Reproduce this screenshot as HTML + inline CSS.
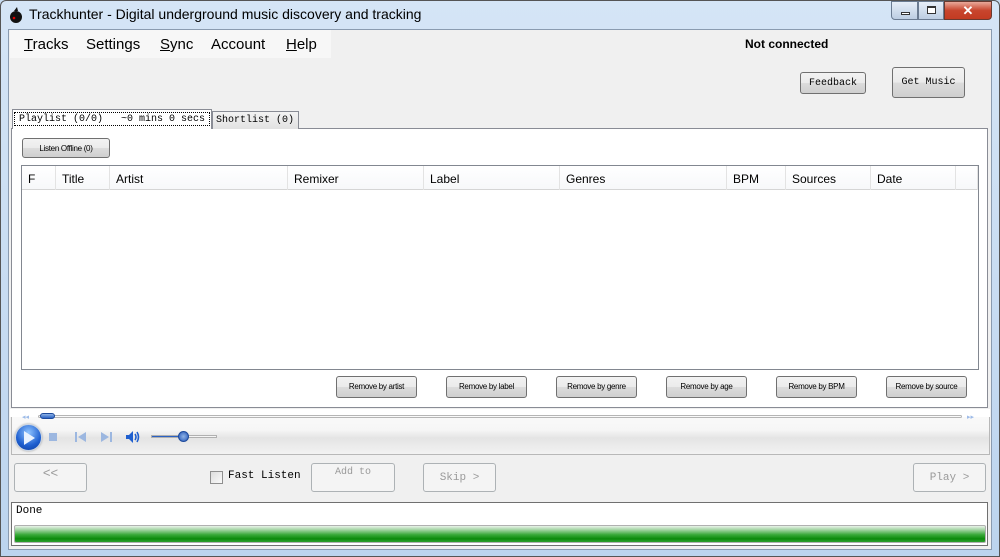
<!DOCTYPE html>
<html><head><meta charset="utf-8"><style>
*{box-sizing:border-box;margin:0;padding:0}
body{width:1000px;height:557px;overflow:hidden;background:#c6dbf1;font-family:"Liberation Sans",sans-serif;position:relative}
.a{position:absolute}
.frame{left:0;top:0;width:1000px;height:557px;background:linear-gradient(#d5e5f6,#bcd4ee);border:1px solid #555;border-radius:6px 6px 0 0}
.client{left:8px;top:29px;width:984px;height:521px;background:#f0f0f0;border:1px solid #8a9bb0}
.mono{font-family:"Liberation Mono","DejaVu Sans Mono",monospace;font-size:10px;white-space:nowrap}
.btn{border:1px solid #707070;border-radius:3px;background:linear-gradient(#f2f2f2 0%,#ebebeb 50%,#dcdcdc 51%,#cfcfcf 100%);text-align:center;color:#000}
.rb{font-size:8px;line-height:19px;letter-spacing:-0.3px;white-space:nowrap}
.dis{border:1px solid #adb2b5;border-radius:3px;background:#f4f4f4;color:#9a9a9a;text-align:center}
.col{top:0;height:24px;border-right:1px solid #e3e3e3;font-size:12px;line-height:26px;padding-left:6px}
.menu span{position:absolute;top:0}
</style></head><body>
<div class="a frame"></div>
<svg class="a" style="left:8px;top:6px" width="16" height="18"><circle cx="8" cy="11" r="6" fill="#111"/><path d="M6 5 L9 1 L10 5Z" fill="#111"/><circle cx="6" cy="12" r="1.3" fill="#d00"/></svg>
<div class="a" style="left:29px;top:6px;font-size:14px;color:#000">Trackhunter - Digital underground music discovery and tracking</div>
<div class="a" style="left:891px;top:1px;width:27px;height:19px;border:1px solid #6a7b91;border-radius:0 0 0 4px;background:linear-gradient(#e6eef8,#bccde2)"><div class="a" style="left:9px;top:10px;width:9px;height:3px;border:1px solid #333;background:#fff"></div></div>
<div class="a" style="left:918px;top:1px;width:26px;height:19px;border:1px solid #6a7b91;background:linear-gradient(#e6eef8,#bccde2)"><div class="a" style="left:8px;top:4px;width:9px;height:8px;border:1px solid #333;border-top-width:2px;background:#fff"></div></div>
<div class="a" style="left:944px;top:1px;width:48px;height:19px;border:1px solid #6a3a30;border-radius:0 0 4px 0;background:linear-gradient(#e9a99a,#c8452d 50%,#c33b22);color:#fff;font-weight:bold;font-size:13px;text-align:center;line-height:17px">✕</div>
<div class="a client"></div>
<div class="a menu" style="left:10px;top:30px;width:321px;height:28px;background:#f7f7f7;font-size:15px;line-height:29px;white-space:nowrap"><span style="left:14px"><u>T</u>racks</span><span style="left:76px">Settings</span><span style="left:150px"><u>S</u>ync</span><span style="left:201px">Account</span><span style="left:276px"><u>H</u>elp</span></div>
<div class="a" style="left:745px;top:37px;font-size:12px;font-weight:bold">Not connected</div>
<div class="a btn mono" style="left:800px;top:72px;width:66px;height:22px;line-height:21px">Feedback</div>
<div class="a btn mono" style="left:892px;top:67px;width:73px;height:31px;line-height:30px">Get Music</div>
<div class="a" style="left:11px;top:128px;width:977px;height:280px;background:#fff;border:1px solid #898c95"></div>
<div class="a mono" style="left:212px;top:111px;width:87px;height:18px;background:linear-gradient(#f3f3f3,#e2e2e2);border:1px solid #898c95;border-bottom:none;line-height:18px;padding-left:3px">Shortlist (0)</div>
<div class="a mono" style="left:12px;top:109px;width:200px;height:20px;background:#fff;border:1px solid #898c95;border-bottom:none;padding:2px 1px"><div style="border:1px dotted #000;height:14px;line-height:13px;padding-left:4px;white-space:pre">Playlist (0/0)   ~0 mins 0 secs</div></div>
<div class="a btn rb" style="left:22px;top:138px;width:88px;height:20px">Listen Offline (0)</div>
<div class="a" style="left:21px;top:165px;width:958px;height:205px;border:1px solid #828790;background:#fff">
<div class="a" style="left:0;top:0;width:956px;height:24px;background:linear-gradient(#fff,#f7f8fa);border-bottom:1px solid #d5d5d5"></div>
<div class="a col" style="left:0;width:34px">F</div>
<div class="a col" style="left:34px;width:54px">Title</div>
<div class="a col" style="left:88px;width:178px">Artist</div>
<div class="a col" style="left:266px;width:136px">Remixer</div>
<div class="a col" style="left:402px;width:136px">Label</div>
<div class="a col" style="left:538px;width:167px">Genres</div>
<div class="a col" style="left:705px;width:59px">BPM</div>
<div class="a col" style="left:764px;width:85px">Sources</div>
<div class="a col" style="left:849px;width:85px">Date</div>
<div class="a col" style="left:934px;width:22px"></div>
</div>
<div class="a btn rb" style="left:336px;top:376px;width:81px;height:22px;line-height:20px">Remove by artist</div>
<div class="a btn rb" style="left:446px;top:376px;width:81px;height:22px;line-height:20px">Remove by label</div>
<div class="a btn rb" style="left:556px;top:376px;width:81px;height:22px;line-height:20px">Remove by genre</div>
<div class="a btn rb" style="left:666px;top:376px;width:81px;height:22px;line-height:20px">Remove by age</div>
<div class="a btn rb" style="left:776px;top:376px;width:81px;height:22px;line-height:20px">Remove by BPM</div>
<div class="a btn rb" style="left:886px;top:376px;width:81px;height:22px;line-height:20px">Remove by source</div>
<div class="a" style="left:11px;top:413px;width:979px;height:42px;border:1px solid #b8b8b8;background:linear-gradient(#fafafa 0%,#f6f6f6 40%,#e4e4e4 60%,#f2f2f2 100%)"></div>
<div class="a" style="left:10px;top:409px;width:980px;height:8px;background:#fff"></div>
<div class="a" style="left:38px;top:415px;width:924px;height:3px;border:1px solid #b5b5b5;border-radius:2px;background:#fafafa"></div>
<div class="a" style="left:40px;top:413px;width:15px;height:6px;border-radius:3px;background:linear-gradient(#8fb3e6,#2b62c4);border:1px solid #1d4a9c"></div>
<div class="a" style="left:22px;top:413px;font-size:7px;color:#9dbbe8">◂◂</div>
<div class="a" style="left:967px;top:413px;font-size:7px;color:#9dbbe8">▸▸</div>
<div class="a" style="left:15px;top:424px;width:27px;height:27px;border-radius:50%;background:radial-gradient(circle at 50% 30%,#8fc4ff,#1e5fd0 60%,#0b3a9a);border:1px solid #c8d4e4;box-shadow:0 0 2px #999"></div>
<svg class="a" style="left:21px;top:430px" width="16" height="16"><path d="M3 1 L14 8 L3 15Z" fill="#e8f2ff"/></svg>
<div class="a" style="left:49px;top:433px;width:8px;height:8px;background:#9cb7e0"></div>
<svg class="a" style="left:74px;top:431px" width="14" height="12"><rect x="1" y="1" width="2" height="10" fill="#9cb7e0"/><path d="M12 1 L4 6 L12 11Z" fill="#9cb7e0"/></svg>
<svg class="a" style="left:100px;top:431px" width="14" height="12"><rect x="10" y="1" width="2" height="10" fill="#9cb7e0"/><path d="M1 1 L9 6 L1 11Z" fill="#9cb7e0"/></svg>
<svg class="a" style="left:125px;top:430px" width="18" height="14"><path d="M1 5 H4 L8 1 V13 L4 9 H1Z" fill="#1f5fcf"/><path d="M10 4 Q12 7 10 10 M12 2 Q15 7 12 12" stroke="#1f5fcf" stroke-width="1.6" fill="none"/></svg>
<div class="a" style="left:151px;top:435px;width:66px;height:3px;border:1px solid #b0b0b0;background:linear-gradient(90deg,#2b62c4 50%,#f5f5f5 50%)"></div>
<div class="a" style="left:178px;top:431px;width:11px;height:11px;border-radius:50%;background:radial-gradient(#8fb3e6,#2456b8);border:1px solid #1d4a9c"></div>
<div class="a dis" style="left:14px;top:463px;width:73px;height:29px;font-size:13px;line-height:18px">&lt;&lt;</div>
<div class="a" style="left:210px;top:471px;width:13px;height:13px;border:1px solid #8f8f8f;background:linear-gradient(135deg,#ddd,#fafafa)"></div>
<div class="a mono" style="left:228px;top:470px;font-size:11px">Fast Listen</div>
<div class="a dis mono" style="left:311px;top:463px;width:84px;height:29px;line-height:18px">Add to</div>
<div class="a dis mono" style="left:423px;top:463px;width:73px;height:29px;line-height:28px;font-size:11px">Skip &gt;</div>
<div class="a dis mono" style="left:913px;top:463px;width:73px;height:29px;line-height:28px;font-size:11px">Play &gt;</div>
<div class="a" style="left:11px;top:502px;width:977px;height:44px;border:1px solid #707070;background:#fff"></div>
<div class="a mono" style="left:16px;top:505px;font-size:11px">Done</div>
<div class="a" style="left:14px;top:525px;width:972px;height:18px;border:1px solid #b0b0b0;border-radius:2px;background:linear-gradient(#e8f3e8 0%,#9fd29f 25%,#37a837 55%,#0c8a0c 80%,#2ea02e 100%)"></div>
</body></html>
